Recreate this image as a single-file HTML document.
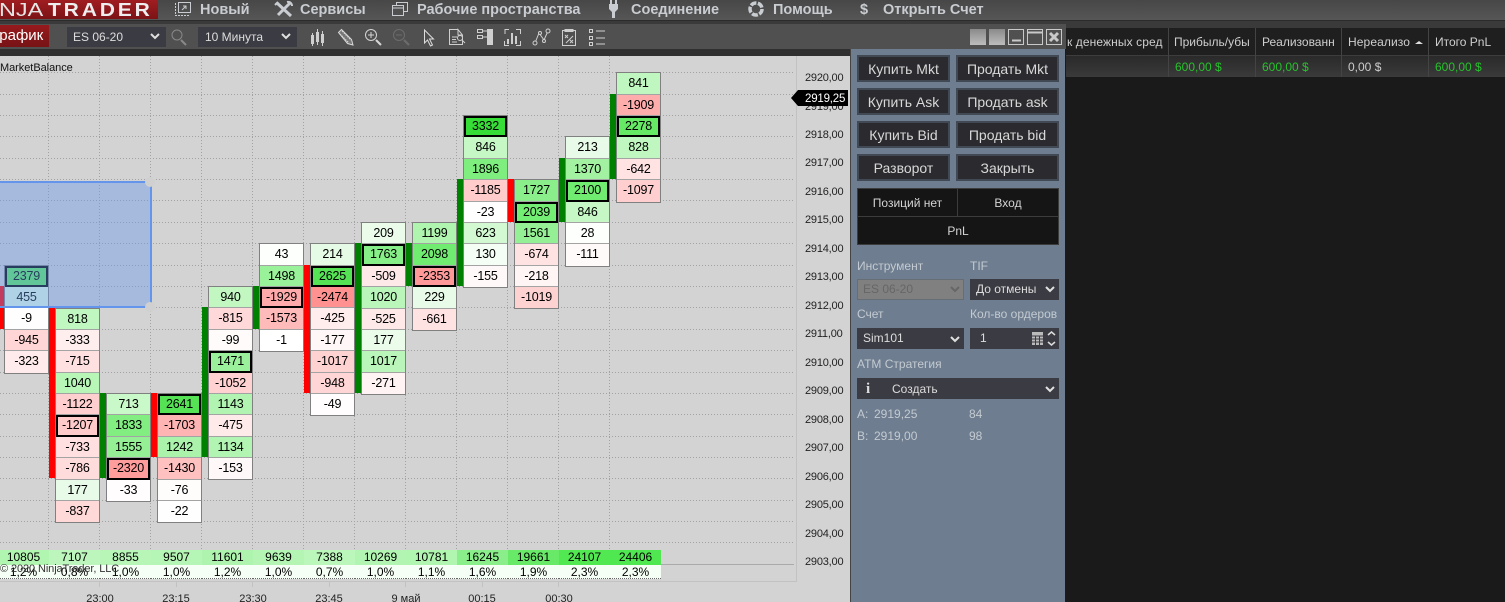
<!DOCTYPE html>
<html><head><meta charset="utf-8"><style>
html,body{margin:0;padding:0;background:#1b1b1b}
#r{position:relative;width:1505px;height:602px;overflow:hidden;font-family:"Liberation Sans",sans-serif;background:#1b1b1b}
#r div,#r svg{position:absolute}
.t{white-space:nowrap;line-height:14px;height:14px}
.m{font-weight:bold;font-size:14.5px;color:#c9cdd1;top:3px}
.col{width:45px;border:1px solid #808080;box-sizing:border-box;background:#fff}
.col p{margin:0;height:21.38px;line-height:21px;font-size:12.5px;letter-spacing:-.2px;text-align:center;color:#000;box-sizing:border-box;border-bottom:1px solid #a3a3a3}
.col p:last-child{border-bottom:0}
.col p.k{box-shadow:inset 0 0 0 2px #000;border-bottom:0}
.p{font-size:11px;letter-spacing:-.2px;color:#222;left:805px;width:40px;margin-top:1px}
.x{font-size:11px;color:#222;top:592px;width:50px;text-align:center}
.tot{top:550px;height:15px;width:51px;text-align:center;font-size:12px;line-height:15px;color:#000}
.pc{top:565px;height:13px;width:51px;text-align:center;font-size:12px;line-height:15px;color:#000;background:#f6fff6;border-bottom:1px dotted #666;box-sizing:content-box}
.b{background:#2b2b2f;border:2px solid #414a54;box-sizing:border-box;color:#d8d8d8;font-size:14px;text-align:center;line-height:24px;height:27px}
.s{background:#3b3b43;color:#ddd;font-size:12px;line-height:21px;height:21px;box-sizing:border-box}
.l{font-size:12px;color:#c3cad1}
.h{font-size:12px;color:#cfcfcf;top:35px}
.g{font-size:12px;color:#27c22c;top:60px}
</style></head><body><div id="r">

<!-- top bar -->
<div style="left:0;top:0;width:1505px;height:20px;background:linear-gradient(#474747,#565656)"></div>
<div style="left:0;top:20px;width:1505px;height:8px;background:#3a3a3a;border-top:1px solid #2b2b2b;box-sizing:border-box"></div>
<div style="left:0;top:0;width:158px;height:19px;background:linear-gradient(#a01d20,#7c1316)"></div>
<div class="t" style="left:-1px;top:3px;color:#e6e6e6;font-size:18px;letter-spacing:0;line-height:15px;height:15px;transform:scaleX(1.3);transform-origin:0 0">NJA</div>
<div class="t" style="left:48px;top:3px;color:#eee;font-size:18px;font-weight:bold;letter-spacing:2.4px;line-height:15px;height:15px;transform:scaleX(1.17);transform-origin:0 0">TRADER</div>
<div class="t m" style="left:200px">Новый</div>
<div class="t m" style="left:300px">Сервисы</div>
<div class="t m" style="left:417px">Рабочие пространства</div>
<div class="t m" style="left:631px">Соединение</div>
<div class="t m" style="left:773px">Помощь</div>
<div class="t m" style="left:860px">$</div>
<div class="t m" style="left:883px">Открыть Счет</div>

<!-- chart window toolbar -->
<div style="left:0;top:24px;width:1066px;height:25px;background:#505050"></div>
<div style="left:0;top:49px;width:851px;height:7px;background:#303030"></div>
<div style="left:0;top:25px;width:49px;height:22px;background:linear-gradient(#96191c,#771316)"></div>
<div class="t" style="left:-8px;top:29px;color:#fff;font-size:15px">График</div>
<div class="s" style="left:67px;top:27px;width:99px;padding-left:6px;height:20px;line-height:20px">ES 06-20</div>
<div class="s" style="left:198px;top:27px;width:99px;padding-left:7px;height:20px;line-height:20px">10 Минута</div>

<!-- chart -->
<div style="left:0;top:56px;width:851px;height:546px;background:#d3d3d3"></div>
<svg style="left:0;top:0" width="851" height="602">
<g stroke="#a2a2a2" stroke-width="1" stroke-dasharray="1 2" fill="none">
<path d="M0 72.5H794M0 94.5H794M0 115.5H794M0 136.5H794M0 158.5H794M0 179.5H794M0 200.5H794M0 222.5H794M0 243.5H794M0 265.5H794M0 286.5H794M0 307.5H794M0 329.5H794M0 350.5H794M0 372.5H794M0 393.5H794M0 414.5H794M0 436.5H794M0 457.5H794M0 478.5H794M0 500.5H794M0 521.5H794M0 542.5H794"/>
<path d="M48.5 56V578M99.5 56V578M150.5 56V578M201.5 56V578M252.5 56V578M303.5 56V578M354.5 56V578M405.5 56V578M456.5 56V578M507.5 56V578M558.5 56V578M609.5 56V578"/>
</g>
<path d="M661 564.5H794" stroke="#aaa"/>
<path d="M0 581.5H796.5V56" stroke="#c2c2c2" fill="none"/>
<path d="M99.5 582v5M176.5 582v5M252.5 582v5M329.5 582v5M405.5 582v5M482.5 582v5M558.5 582v5" stroke="#c2c2c2"/>
<g>
<rect x="0" y="286" width="4" height="43" fill="#f00"/>
<rect x="49" y="307" width="6" height="171" fill="#f00"/>
<rect x="100" y="393" width="6" height="85" fill="#008000"/>
<rect x="151" y="393" width="6" height="64" fill="#f00"/>
<rect x="202" y="307" width="6" height="150" fill="#008000"/>
<rect x="253" y="286" width="6" height="43" fill="#008000"/>
<rect x="304" y="265" width="6" height="128" fill="#f00"/>
<rect x="355" y="243" width="6" height="150" fill="#008000"/>
<rect x="406" y="243" width="6" height="43" fill="#008000"/>
<rect x="457" y="179" width="6" height="107" fill="#008000"/>
<rect x="508" y="179" width="6" height="43" fill="#f00"/>
<rect x="559" y="158" width="6" height="64" fill="#008000"/>
<rect x="610" y="94" width="6" height="85" fill="#008000"/>
</g>
</svg>

<div class="t" style="left:0;top:61px;font-size:11px;letter-spacing:-.05px;color:#111">MarketBalance</div>

<!-- cells -->
<div class="col" style="left:4px;top:264.7px"><p class="k" style="background:#5fe85f">2379</p><p style="background:#e1fbe1">455</p><p style="background:#fffefe">-9</p><p style="background:#ffd5d5">-945</p><p style="background:#ffebeb">-323</p></div>
<div class="col" style="left:55px;top:307.5px"><p style="background:#c0f7c0">818</p><p style="background:#ffeeee">-333</p><p style="background:#ffe0e0">-715</p><p style="background:#b8f6b8">1040</p><p style="background:#ffcece">-1122</p><p class="k" style="background:#ffcaca">-1207</p><p style="background:#ffdfdf">-733</p><p style="background:#ffdcdc">-786</p><p style="background:#e8fbe8">177</p><p style="background:#ffd8d8">-837</p></div>
<div class="col" style="left:106px;top:393px"><p style="background:#c9f8c9">713</p><p style="background:#82ee82">1833</p><p style="background:#95f095">1555</p><p class="k" style="background:#ff9c9c">-2320</p><p style="background:#fffdfd">-33</p></div>
<div class="col" style="left:157px;top:393px"><p class="k" style="background:#55e355">2641</p><p style="background:#ffb4b4">-1703</p><p style="background:#abf3ab">1242</p><p style="background:#ffc0c0">-1430</p><p style="background:#fffcfc">-76</p><p style="background:#fffefe">-22</p></div>
<div class="col" style="left:208px;top:286.1px"><p style="background:#c2f7c2">940</p><p style="background:#ffd9d9">-815</p><p style="background:#fffbfb">-99</p><p class="k" style="background:#9bf19b">1471</p><p style="background:#ffd1d1">-1052</p><p style="background:#b1f4b1">1143</p><p style="background:#ffeaea">-475</p><p style="background:#b2f4b2">1134</p><p style="background:#fff8f8">-153</p></div>
<div class="col" style="left:259px;top:243.3px"><p style="background:#fcfffc">43</p><p style="background:#99f199">1498</p><p class="k" style="background:#ffaaaa">-1929</p><p style="background:#ffbaba">-1573</p><p style="background:#ffffff">-1</p></div>
<div class="col" style="left:310px;top:243.3px"><p style="background:#e6fbe6">214</p><p class="k" style="background:#55e355">2625</p><p style="background:#ff9191">-2474</p><p style="background:#ffecec">-425</p><p style="background:#fff7f7">-177</p><p style="background:#ffd2d2">-1017</p><p style="background:#ffd5d5">-948</p><p style="background:#fffdfd">-49</p></div>
<div class="col" style="left:361px;top:222px"><p style="background:#ebfceb">209</p><p class="k" style="background:#87ef87">1763</p><p style="background:#ffe8e8">-509</p><p style="background:#baf6ba">1020</p><p style="background:#ffe8e8">-525</p><p style="background:#ebfceb">177</p><p style="background:#baf6ba">1017</p><p style="background:#fff3f3">-271</p></div>
<div class="col" style="left:412px;top:222px"><p style="background:#aff4af">1199</p><p style="background:#70ec70">2098</p><p class="k" style="background:#ff9898">-2353</p><p style="background:#e8fbe8">229</p><p style="background:#ffe2e2">-661</p></div>
<div class="col" style="left:463px;top:115.1px"><p class="k" style="background:#37dd37">3332</p><p style="background:#c5f8c5">846</p><p style="background:#7eee7e">1896</p><p style="background:#ffcbcb">-1185</p><p style="background:#fffefe">-23</p><p style="background:#d2f9d2">623</p><p style="background:#f5fef5">130</p><p style="background:#fff8f8">-155</p></div>
<div class="col" style="left:514px;top:179.2px"><p style="background:#8aef8a">1727</p><p class="k" style="background:#74ed74">2039</p><p style="background:#95f095">1561</p><p style="background:#ffe2e2">-674</p><p style="background:#fff5f5">-218</p><p style="background:#ffd2d2">-1019</p></div>
<div class="col" style="left:565px;top:136.4px"><p style="background:#e8fbe8">213</p><p style="background:#a2f2a2">1370</p><p class="k" style="background:#70ec70">2100</p><p style="background:#c5f8c5">846</p><p style="background:#fdfffd">28</p><p style="background:#fffafa">-111</p></div>
<div class="col" style="left:616px;top:72.3px"><p style="background:#c0f7c0">841</p><p style="background:#ffacac">-1909</p><p class="k" style="background:#66ea66">2278</p><p style="background:#c0f7c0">828</p><p style="background:#ffe3e3">-642</p><p style="background:#ffcfcf">-1097</p></div>

<!-- totals -->
<div class="tot" style="left:-2px;background:#b0f5b0">10805</div><div class="tot" style="left:49px;background:#bcf6bc">7107</div><div class="tot" style="left:100px;background:#b8f6b8">8855</div><div class="tot" style="left:151px;background:#b5f5b5">9507</div><div class="tot" style="left:202px;background:#aef4ae">11601</div><div class="tot" style="left:253px;background:#b4f5b4">9639</div><div class="tot" style="left:304px;background:#bbf6bb">7388</div><div class="tot" style="left:355px;background:#b2f5b2">10269</div><div class="tot" style="left:406px;background:#b0f5b0">10781</div><div class="tot" style="left:457px;background:#8aee8a">16245</div><div class="tot" style="left:508px;background:#68ea68">19661</div><div class="tot" style="left:559px;background:#52e852">24107</div><div class="tot" style="left:610px;background:#50e850">24406</div>
<div class="pc" style="left:-2px">1,2%</div><div class="pc" style="left:49px">0,8%</div><div class="pc" style="left:100px">1,0%</div><div class="pc" style="left:151px">1,0%</div><div class="pc" style="left:202px">1,2%</div><div class="pc" style="left:253px">1,0%</div><div class="pc" style="left:304px">0,7%</div><div class="pc" style="left:355px">1,0%</div><div class="pc" style="left:406px">1,1%</div><div class="pc" style="left:457px">1,6%</div><div class="pc" style="left:508px">1,9%</div><div class="pc" style="left:559px">2,3%</div><div class="pc" style="left:610px">2,3%</div>
<div class="t" style="left:0;top:562px;font-size:11px;letter-spacing:-.1px;color:#333">© 2020 NinjaTrader, LLC</div>

<!-- overlay -->
<div style="left:-2px;top:181px;width:150px;height:123px;background:rgba(100,149,237,.4);border:2px solid #6495ed"></div>
<svg style="left:0;top:170px" width="170" height="150"><circle cx="150" cy="12" r="5" fill="#d0d0d0"/><circle cx="150" cy="137" r="5" fill="#d0d0d0"/></svg>

<!-- price axis -->
<div class="t p" style="top:70px">2920,00</div><div class="t p" style="top:99px">2919,00</div><div class="t p" style="top:127px">2918,00</div><div class="t p" style="top:155px">2917,00</div><div class="t p" style="top:184px">2916,00</div><div class="t p" style="top:212px">2915,00</div><div class="t p" style="top:241px">2914,00</div><div class="t p" style="top:269px">2913,00</div><div class="t p" style="top:298px">2912,00</div><div class="t p" style="top:326px">2911,00</div><div class="t p" style="top:355px">2910,00</div><div class="t p" style="top:383px">2909,00</div><div class="t p" style="top:412px">2908,00</div><div class="t p" style="top:440px">2907,00</div><div class="t p" style="top:469px">2906,00</div><div class="t p" style="top:497px">2905,00</div><div class="t p" style="top:526px">2904,00</div><div class="t p" style="top:554px">2903,00</div>
<svg style="left:788px;top:88px" width="62" height="20"><path d="M3 10L10 2H60V18H10Z" fill="#000"/></svg>
<div class="t" style="left:805px;top:92px;font-size:11.5px;letter-spacing:-.2px;color:#fff">2919,25</div>

<!-- time axis -->
<div class="t x" style="left:75px">23:00</div><div class="t x" style="left:151px">23:15</div><div class="t x" style="left:228px">23:30</div><div class="t x" style="left:304px">23:45</div><div class="t x" style="left:381px">9 май</div><div class="t x" style="left:457px">00:15</div><div class="t x" style="left:534px">00:30</div>

<!-- order panel -->
<div style="left:850px;top:49px;width:1px;height:553px;background:#444"></div>
<div style="left:851px;top:49px;width:214px;height:553px;background:#6e7d8f"></div>
<div class="b" style="left:857px;top:55px;width:93px">Купить Mkt</div><div class="b" style="left:956px;top:55px;width:103px">Продать Mkt</div>
<div class="b" style="left:857px;top:88px;width:93px">Купить Ask</div><div class="b" style="left:956px;top:88px;width:103px">Продать ask</div>
<div class="b" style="left:857px;top:121px;width:93px">Купить Bid</div><div class="b" style="left:956px;top:121px;width:103px">Продать bid</div>
<div class="b" style="left:857px;top:154px;width:93px">Разворот</div><div class="b" style="left:956px;top:154px;width:103px">Закрыть</div>
<div style="left:857px;top:188px;width:202px;height:57px;background:#151515;border:1px solid #3c3c3c;box-sizing:border-box"></div>
<div style="left:857px;top:216px;width:202px;height:1px;background:#3c3c3c"></div>
<div style="left:957px;top:188px;width:1px;height:28px;background:#3c3c3c"></div>
<div class="t" style="left:858px;top:196px;width:99px;text-align:center;font-size:12px;color:#d5d5d5">Позиций нет</div>
<div class="t" style="left:958px;top:196px;width:100px;text-align:center;font-size:12px;color:#d5d5d5">Вход</div>
<div class="t" style="left:858px;top:224px;width:200px;text-align:center;font-size:12px;color:#d5d5d5">PnL</div>

<div class="t l" style="left:857px;top:259px">Инструмент</div><div class="t l" style="left:970px;top:259px">TIF</div>
<div class="s" style="left:857px;top:279px;width:107px;background:#808080;border:1px solid #666d75;color:#666;padding-left:5px;line-height:19px">ES 06-20</div>
<div class="s" style="left:970px;top:279px;width:89px;padding-left:6px">До отмены</div>
<div class="t l" style="left:857px;top:307px">Счет</div><div class="t l" style="left:970px;top:307px">Кол-во ордеров</div>
<div class="s" style="left:857px;top:328px;width:107px;padding-left:6px">Sim101</div>
<div class="s" style="left:970px;top:328px;width:89px;padding-left:10px">1</div>
<div class="t l" style="left:857px;top:357px">АТМ Стратегия</div>
<div class="s" style="left:857px;top:378px;width:202px;padding-left:35px;line-height:22px">Создать</div>
<div class="t" style="left:866px;top:382px;font:bold 15px 'Liberation Serif',serif;color:#ddd;line-height:14px">i</div>
<div class="t l" style="left:857px;top:407px">A:</div><div class="t l" style="left:874px;top:407px">2919,25</div><div class="t l" style="left:969px;top:407px">84</div>
<div class="t l" style="left:857px;top:429px">B:</div><div class="t l" style="left:874px;top:429px">2919,00</div><div class="t l" style="left:969px;top:429px">98</div>

<!-- grid right -->
<div style="left:1066px;top:28px;width:439px;height:27px;background:#1f1f1f"></div>
<div style="left:1066px;top:55px;width:439px;height:22px;background:linear-gradient(#2a2a2a,#3a3a3a);border-top:1px solid #3d3d3d;box-sizing:border-box"></div>
<div style="left:1066px;top:77px;width:439px;height:525px;background:#1a1a1a"></div>
<div style="left:1168px;top:28px;width:1px;height:49px;background:#444"></div><div style="left:1255px;top:28px;width:1px;height:49px;background:#444"></div><div style="left:1341px;top:28px;width:1px;height:49px;background:#444"></div><div style="left:1428px;top:28px;width:1px;height:49px;background:#444"></div>
<div class="t h" style="left:1067px;letter-spacing:.1px">к денежных сред</div><div class="t h" style="left:1174px">Прибыль/убы</div><div class="t h" style="left:1262px">Реализованн</div><div class="t h" style="left:1348px;letter-spacing:.1px">Нереализо</div><div class="t h" style="left:1435px">Итого PnL</div>
<div class="t g" style="left:1175px">600,00 $</div><div class="t g" style="left:1262px">600,00 $</div><div class="t g" style="left:1348px;color:#ccc">0,00 $</div><div class="t g" style="left:1435px">600,00 $</div>

<!-- icons -->
<svg style="left:0;top:0" width="1505" height="602" fill="none">
<!-- menu -->
<g stroke="#c9cdd1">
<path d="M175.5 3v12.5H189" stroke-dasharray="2 1"/><rect x="178.5" y="2.5" width="12" height="10"/><path d="M182 10l4-4M183 6h3v3"/>
<path d="M277 3l14 13M291 2l-13 13" stroke-width="3"/><path d="M275 5l3-3M287 2a4 4 0 0 1 5 4" stroke-width="2"/>
<rect x="396.5" y="2.5" width="11" height="9"/><rect x="392.5" y="5.5" width="11" height="10" fill="#505050"/><path d="M393 8h10" stroke-width="1"/>
<circle cx="756" cy="9" r="6" stroke-width="3.5" stroke-dasharray="6 1.5"/>
</g>
<path d="M610 0h2v4h3V0h2v4h1v5l-3 3v6h-3v-6l-3-3V4h1z" fill="#c9cdd1"/>
<!-- toolbar -->
<path d="M181 40l5 5" stroke="#888" stroke-width="2"/><circle cx="177" cy="35" r="5" stroke="#888"/>
<g fill="#cfcfcf">
<rect x="311" y="35" width="3" height="9"/><rect x="312" y="33" width="1" height="13"/>
<rect x="316" y="32" width="3" height="10"/><rect x="317" y="29" width="1" height="16"/>
<rect x="321" y="34" width="3" height="9"/><rect x="322" y="31" width="1" height="15"/>
</g>
<path d="M338.500 32.500l3-3 10 10 1.500 5.500-5.500-1.500z" stroke="#d8d8d8" fill="#777"/><path d="M340 34l9 9M342 31l9 9" stroke="#d8d8d8" stroke-dasharray="1.500 1"/>
<g stroke="#d5d5d5"><circle cx="371" cy="35" r="5.5"/><path d="M368 35h6M371 32v6"/><path d="M376 40l5 5" stroke-width="2"/></g>
<g stroke="#6c6c6c"><circle cx="399" cy="35" r="5.5"/><path d="M396 35h6"/><path d="M404 40l5 5" stroke-width="2"/></g>
<path d="M424.5 30v13l3-3 3 6 2-1-3-6h4z" stroke="#ddd"/>
<g stroke="#cfcfcf"><path d="M458 29.5h-8.500v15h13V35l-4.500-5.500v5.500h4.500M452 37h5M452 39.500h4M452 42h5"/><circle cx="460" cy="38" r="2.500"/><path d="M462 40l3 3"/>
<rect x="477.500" y="29.500" width="5" height="3"/><rect x="477.500" y="35.500" width="5" height="3"/><path d="M483 31h4M483 37h4"/>
<path d="M505 34v-4.500h4M516 29.500h4.500V34M520.500 41v4.500H516M509 45.500h-4.500V41"/>
<path d="M535 43l4-10 5 7 4-9"/><circle cx="535" cy="43" r="2" fill="#505050"/><circle cx="548" cy="31" r="2" fill="#505050"/><circle cx="540" cy="33" r="1.500" fill="#505050"/><circle cx="544" cy="41" r="1.500" fill="#505050"/>
<rect x="562.500" y="30.500" width="13" height="15"/><path d="M565 29.500h8v2h-8zM565 35l3 3M568 35l-3 3M570 40l3 3M573 40l-3 3M566 43l7-7"/>
<rect x="589.500" y="29.500" width="3" height="3"/><rect x="589.500" y="36.500" width="3" height="3"/><rect x="589.500" y="42.500" width="3" height="3"/><path d="M596 31h9M596 38h9M596 44h9"/></g>
<rect x="487" y="29" width="6" height="16" fill="#cfcfcf"/>
<path d="M507 44v-5h2v5zM511 44v-11h2v11zM515 44v-8h2v8z" fill="#cfcfcf"/>
<!-- window buttons -->
<defs><linearGradient id="w" x1="0" y1="0" x2="0" y2="1"><stop offset="0" stop-color="#8a8a8a"/><stop offset="1" stop-color="#bdbdbd"/></linearGradient></defs>
<rect x="970" y="29" width="16" height="16" fill="url(#w)"/><rect x="989" y="29" width="16" height="16" fill="url(#w)"/>
<g stroke="#c9c9c9"><rect x="1008.500" y="29.500" width="15" height="15"/><path d="M1012 40.500h9" stroke-width="2"/><rect x="1027.500" y="29.500" width="15" height="15"/><path d="M1028 32.500h14" stroke-width="2"/><rect x="1046.500" y="29.500" width="15" height="15"/><path d="M1050 33l8 8M1058 33l-8 8" stroke-width="3"/></g>
<!-- chevrons -->
<g stroke="#e0e0e0" stroke-width="2"><path d="M151 34l4 4 4-4M282 34l4 4 4-4M1046 287l4 4 4-4M951 337l4 4 4-4M1046 387l4 4 4-4"/></g>
<path d="M951 287l4 4 4-4" stroke="#666" stroke-width="2"/>
<!-- spinner and calc -->
<rect x="1032" y="332" width="11" height="13" fill="#bbb"/><path d="M1032 336h11M1032 339h11M1032 342h11M1035.500 336v9M1039.500 336v9" stroke="#3b3b43"/>
<path d="M1048 335l3.500-3 3.500 3M1048 342l3.500 3 3.500-3" stroke="#ddd" stroke-width="1.500"/>
<path d="M1415 44l4-3 4 3z" fill="#ddd"/>
</svg>
</div></body></html>
